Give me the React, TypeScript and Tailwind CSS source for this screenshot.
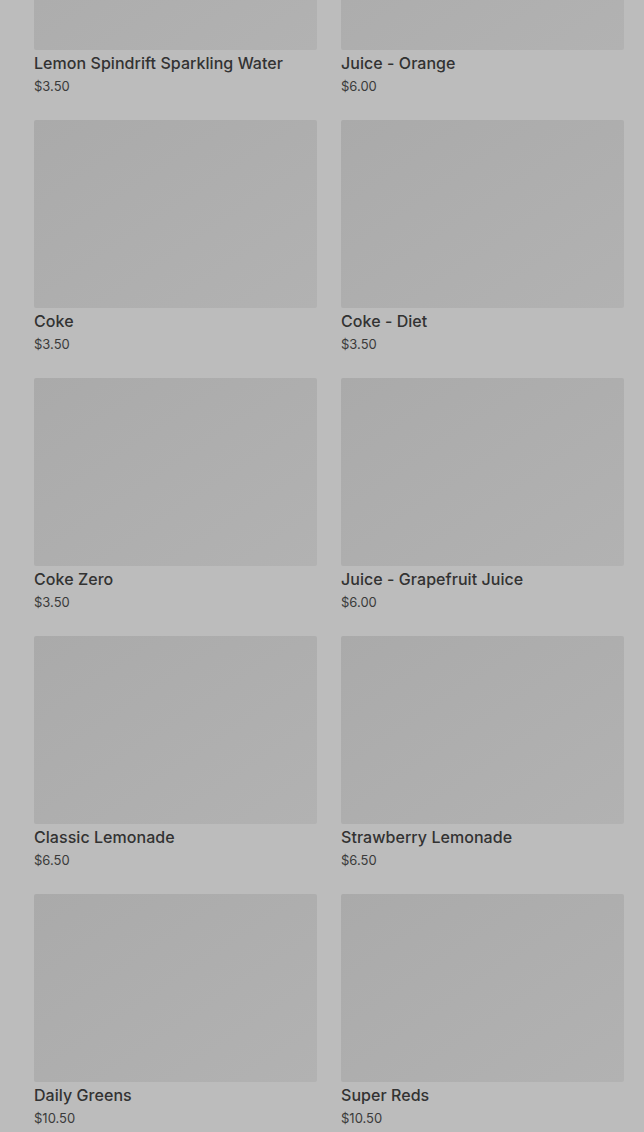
import React from "react";

const items = [
  { name: "Lemon Spindrift Sparkling Water", price: "$3.50" },
  { name: "Juice - Orange", price: "$6.00" },
  { name: "Coke", price: "$3.50" },
  { name: "Coke - Diet", price: "$3.50" },
  { name: "Coke Zero", price: "$3.50" },
  { name: "Juice - Grapefruit Juice", price: "$6.00" },
  { name: "Classic Lemonade", price: "$6.50" },
  { name: "Strawberry Lemonade", price: "$6.50" },
  { name: "Daily Greens", price: "$10.50" },
  { name: "Super Reds", price: "$10.50" },
];

export default function App() {
  return (
    <div className="h-[1132px] w-full overflow-hidden bg-[#bcbcbc]" style={{ fontFamily: "Inter, 'Noto Sans', sans-serif" }}>
      <div className="mt-[-138px] grid grid-cols-2 gap-x-[24px] gap-y-[25px] pl-[34px] pr-[20px]">
        {items.map((it) => (
          <div key={it.name} className="flex flex-col">
            <div className="h-[188px] w-full rounded-[2px] bg-gradient-to-br from-[#aaaaaa] to-[#b2b2b2]" />
            <div className="mt-[3px] text-[16px] leading-[20px] font-medium text-[#323232] tracking-[0.05px]">{it.name}</div>
            <div className="mt-[4px] text-[13px] leading-[18px] text-[#3a3a3a]">{it.price}</div>
          </div>
        ))}
      </div>
    </div>
  );
}
